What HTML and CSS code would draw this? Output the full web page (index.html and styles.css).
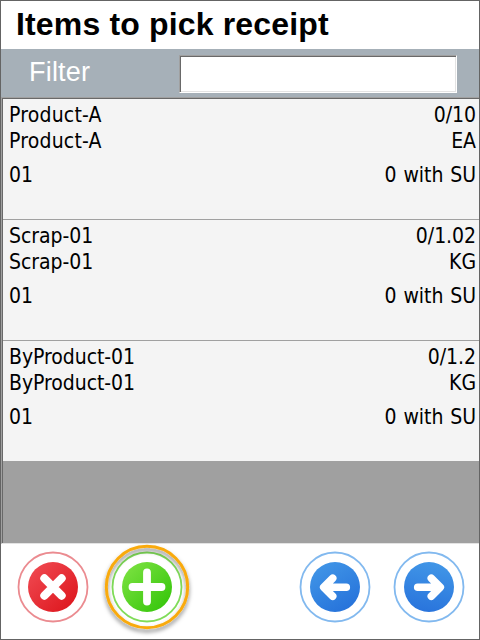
FILE: index.html
```html
<!DOCTYPE html>
<html lang="en">
<head>
<meta charset="utf-8">
<title>Items to pick receipt</title>
<link rel="stylesheet" href="styles.css">
</head>
<body>
<main class="window">
  <h1 class="title">Items to pick receipt</h1>
  <div class="filter">
    <label class="filter-label" for="filter">Filter</label>
    <input class="filter-input" id="filter" type="text">
  </div>
  <div class="list">
    <div class="item product">
      <div class="row"><span class="name">Product-A</span><span>0/10</span></div>
      <div class="row"><span class="name">Product-A</span><span>EA</span></div>
      <div class="row stock"><span>01</span><span class="su">0 with SU</span></div>
    </div>
    <div class="item">
      <div class="row"><span>Scrap-01</span><span>0/1.02</span></div>
      <div class="row"><span>Scrap-01</span><span>KG</span></div>
      <div class="row stock"><span>01</span><span class="su">0 with SU</span></div>
    </div>
    <div class="item">
      <div class="row"><span>ByProduct-01</span><span>0/1.2</span></div>
      <div class="row"><span>ByProduct-01</span><span>KG</span></div>
      <div class="row stock"><span>01</span><span class="su">0 with SU</span></div>
    </div>
  </div>
  <div class="toolbar">
    <svg class="icon cancel" viewBox="0 0 96 96">
      <defs><linearGradient id="red" x1="0" y1="0" x2="1" y2="1"><stop offset=".15" stop-color="#ee444c"/><stop offset=".85" stop-color="#df1b22"/></linearGradient></defs>
      <circle cx="48" cy="48" r="34.5" fill="#fff" stroke="#eb8b90" stroke-width="1.8"/>
      <circle cx="48" cy="48" r="25" fill="url(#red)"/>
      <path d="M39.4 39.4L56.600 56.600M56.600 39.400L39.400 56.600" stroke="#fff" stroke-width="8.2" stroke-linecap="round"/>
    </svg>
    <svg class="icon add" viewBox="0 0 96 96">
      <defs>
        <linearGradient id="green" x1="0" y1="0" x2="1" y2="1"><stop offset=".15" stop-color="#75df3c"/><stop offset=".85" stop-color="#3bc80f"/></linearGradient>
        <filter id="shadow" x="-20%" y="-20%" width="140%" height="140%"><feDropShadow dx="0" dy="3" stdDeviation="2" flood-color="#000" flood-opacity=".5"/></filter>
      </defs>
      <circle cx="48" cy="48" r="34.5" fill="#fff" stroke="#80dc59" stroke-width="1.8"/>
      <circle cx="48" cy="48" r="25" fill="url(#green)"/>
      <path d="M48 33.500V62.500M33.500 48H62.500" stroke="#fff" stroke-width="7.8" stroke-linecap="round"/>
      <circle cx="48" cy="48" r="40.700" fill="none" stroke="#f9aa0b" stroke-width="3" filter="url(#shadow)"/>
    </svg>
    <svg class="icon back" viewBox="0 0 96 96">
      <defs><linearGradient id="blue" x1=".2" y1="0" x2=".8" y2="1"><stop offset="0" stop-color="#4196e7"/><stop offset="1" stop-color="#2571da"/></linearGradient></defs>
      <circle cx="48" cy="48" r="34.500" fill="#fff" stroke="#82b9ef" stroke-width="1.800"/>
      <circle cx="48" cy="48" r="25" fill="url(#blue)"/>
      <path d="M37 48.200H59.300M45.700 39.200L36.700 48.200L45.700 57.200" fill="none" stroke="#fff" stroke-width="7.6" stroke-linecap="round" stroke-linejoin="round"/>
    </svg>
    <svg class="icon next" viewBox="0 0 96 96">
      <defs><linearGradient id="blue2" x1=".6" y1="0" x2=".4" y2="1"><stop offset="0" stop-color="#4196e7"/><stop offset="1" stop-color="#2974dc"/></linearGradient></defs>
      <circle cx="48" cy="48" r="34.500" fill="#fff" stroke="#82b9ef" stroke-width="1.800"/>
      <circle cx="48" cy="48" r="25" fill="url(#blue2)"/>
      <path d="M59 48.200H36.700M50.300 39.200L59.300 48.200L50.300 57.200" fill="none" stroke="#fff" stroke-width="7.6" stroke-linecap="round" stroke-linejoin="round"/>
    </svg>
  </div>
</main>
</body>
</html>
```
FILE: styles.css
```css
* { box-sizing: border-box; }
body { margin: 0; }
.window {
  width: 480px;
  height: 640px;
  border: 1px solid #646464;
  background: #fff;
  display: flex;
  flex-direction: column;
  overflow: hidden;
  color: #000;
}
.title {
  margin: 0;
  height: 48px;
  padding-left: 15px;
  font: bold 32px/46px "Liberation Sans", Arial, sans-serif;
  letter-spacing: .16px;
}
.filter {
  height: 48px;
  background: #a6b0b8;
  display: flex;
  padding: 6px 0 0 28px;
}
.filter-label {
  width: 150px;
  color: #fff;
  font: 27px/35px "Liberation Sans", Arial, sans-serif;
  letter-spacing: .2px;
}
.filter-input {
  width: 278px;
  height: 38px;
  border: 1px solid;
  border-color: #a0a0a0 #fff #fff #a0a0a0;
  border-radius: 0;
  background: #fff;
  box-shadow: inset 1px 1px #696969, inset -1px -1px #e3e3e3;
  outline: 0;
}
.list {
  height: 447px;
  border: solid;
  border-width: 1px 0 1px 1px;
  border-color: #a0a0a0 #e3e3e3 #e3e3e3 #a0a0a0;
  padding: 1px 0 0 1px;
  box-shadow: inset 1px 1px #696969;
  background: #a0a0a0;
  font: 21px/26px "DejaVu Sans Condensed", "DejaVu Sans", Tahoma, sans-serif;
  font-stretch: condensed;
  letter-spacing: -.05px;
}
.item {
  height: 121px;
  padding: 3px 3px 0 6px;
  background: #f4f4f4;
  border-bottom: 1px solid #a0a0a0;
}
.row {
  display: flex;
  justify-content: space-between;
}
.product .name { letter-spacing: .2px; }
.stock { margin-top: 8px; }
.su { word-spacing: 1px; }
.toolbar {
  height: 95px;
  display: flex;
  padding-left: 4px;
}
.icon {
  width: 96px;
  height: 96px;
  flex: none;
  margin-top: -5px;
  overflow: visible;
}
.add { margin-left: -2px; }
.back { margin-left: 92px; }
.next { margin-left: -2px; }
```
